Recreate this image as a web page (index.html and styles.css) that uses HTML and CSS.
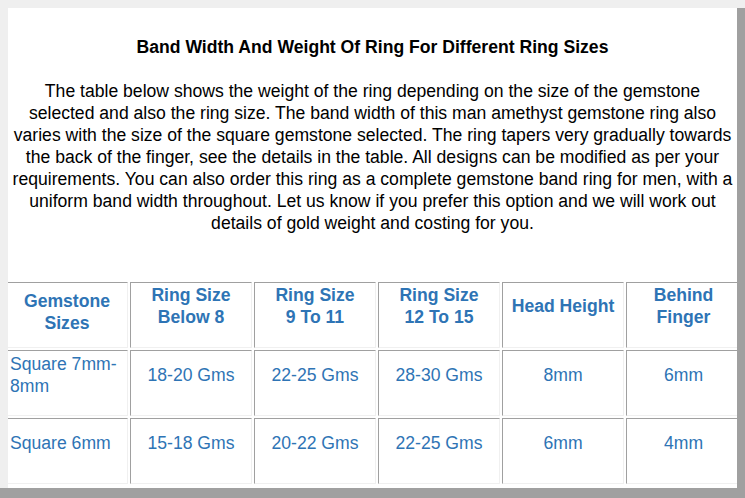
FILE: index.html
```html
<!DOCTYPE html>
<html lang="en">
<head>
<meta charset="utf-8">
<title>Band Width And Weight Of Ring</title>
<link rel="stylesheet" href="styles.css">
</head>
<body>
<div class="screen">
  <div class="panel">
    <h2 class="title">Band Width And Weight Of Ring For Different Ring Sizes</h2>
    <p class="intro">The table below shows the weight of the ring depending on the size of the gemstone selected and also the ring size. The band width of this man amethyst gemstone ring also varies with the size of the square gemstone selected. The ring tapers very gradually towards the back of the finger, see the details in the table. All designs can be modified as per your requirements. You can also order this ring as a complete gemstone band ring for men, with a uniform band width throughout. Let us know if you prefer this option and we will work out details of gold weight and costing for you.</p>
    <table class="sizes">
      <tr class="head-row">
        <th class="first-head">Gemstone Sizes</th>
        <th>Ring Size<br>Below 8</th>
        <th>Ring Size<br>9 To 11</th>
        <th>Ring Size<br>12 To 15</th>
        <th>Head Height</th>
        <th class="last-col">Behind<br>Finger</th>
      </tr>
      <tr class="body-row">
        <td class="name">Square 7mm-8mm</td>
        <td>18-20 Gms</td>
        <td>22-25 Gms</td>
        <td>28-30 Gms</td>
        <td>8mm</td>
        <td>6mm</td>
      </tr>
      <tr class="body-row">
        <td class="name">Square 6mm</td>
        <td>15-18 Gms</td>
        <td>20-22 Gms</td>
        <td>22-25 Gms</td>
        <td>6mm</td>
        <td>4mm</td>
      </tr>
    </table>
  </div>
  <div class="bottom-bar"></div>
</div>
</body>
</html>
```

FILE: styles.css
```css
html, body {
  margin: 0;
  padding: 0;
}

body {
  background: #efefef;
  font-family: "Liberation Sans", Arial, sans-serif;
  color: #000;
  width: 745px;
  height: 498px;
  overflow: hidden;
}

.screen {
  display: flex;
  flex-direction: column;
  padding-top: 8px;
}

.panel {
  margin-left: 8px;
  width: 729px;
  height: 480px;
  background: #fff;
  border-right: 8px solid #a0a0a0;
  overflow: hidden;
}

.bottom-bar {
  height: 10px;
  background: #a0a0a0;
}

.title {
  margin: 27.5px 0 0;
  font-size: 17.6px;
  line-height: 22px;
  font-weight: bold;
  text-align: center;
}

.intro {
  margin: 22px 2px 0;
  font-size: 17.6px;
  line-height: 22px;
  text-align: center;
}

.sizes {
  margin: 46.5px 0 0 -4px;
  width: 739px;
  table-layout: fixed;
  border-collapse: separate;
  border-spacing: 2px;
  font-size: 17.6px;
  line-height: 22px;
  color: #2e74b5;
}

.sizes tr {
  height: 66px;
}

.sizes th,
.sizes td {
  border: 1px solid;
  border-color: #a0a0a0 #f0f0f0 #f0f0f0 #a0a0a0;
  text-align: center;
  vertical-align: middle;
  padding: 0 4px;
}

.sizes th {
  font-weight: bold;
  padding-bottom: 19px;
}

.sizes th.first-head {
  padding-bottom: 6px;
}

.sizes th.last-col {
  width: 105px;
}

.sizes td {
  font-weight: normal;
  padding-bottom: 16px;
}

.sizes td.name {
  text-align: left;
  padding-left: 3px;
}
```
